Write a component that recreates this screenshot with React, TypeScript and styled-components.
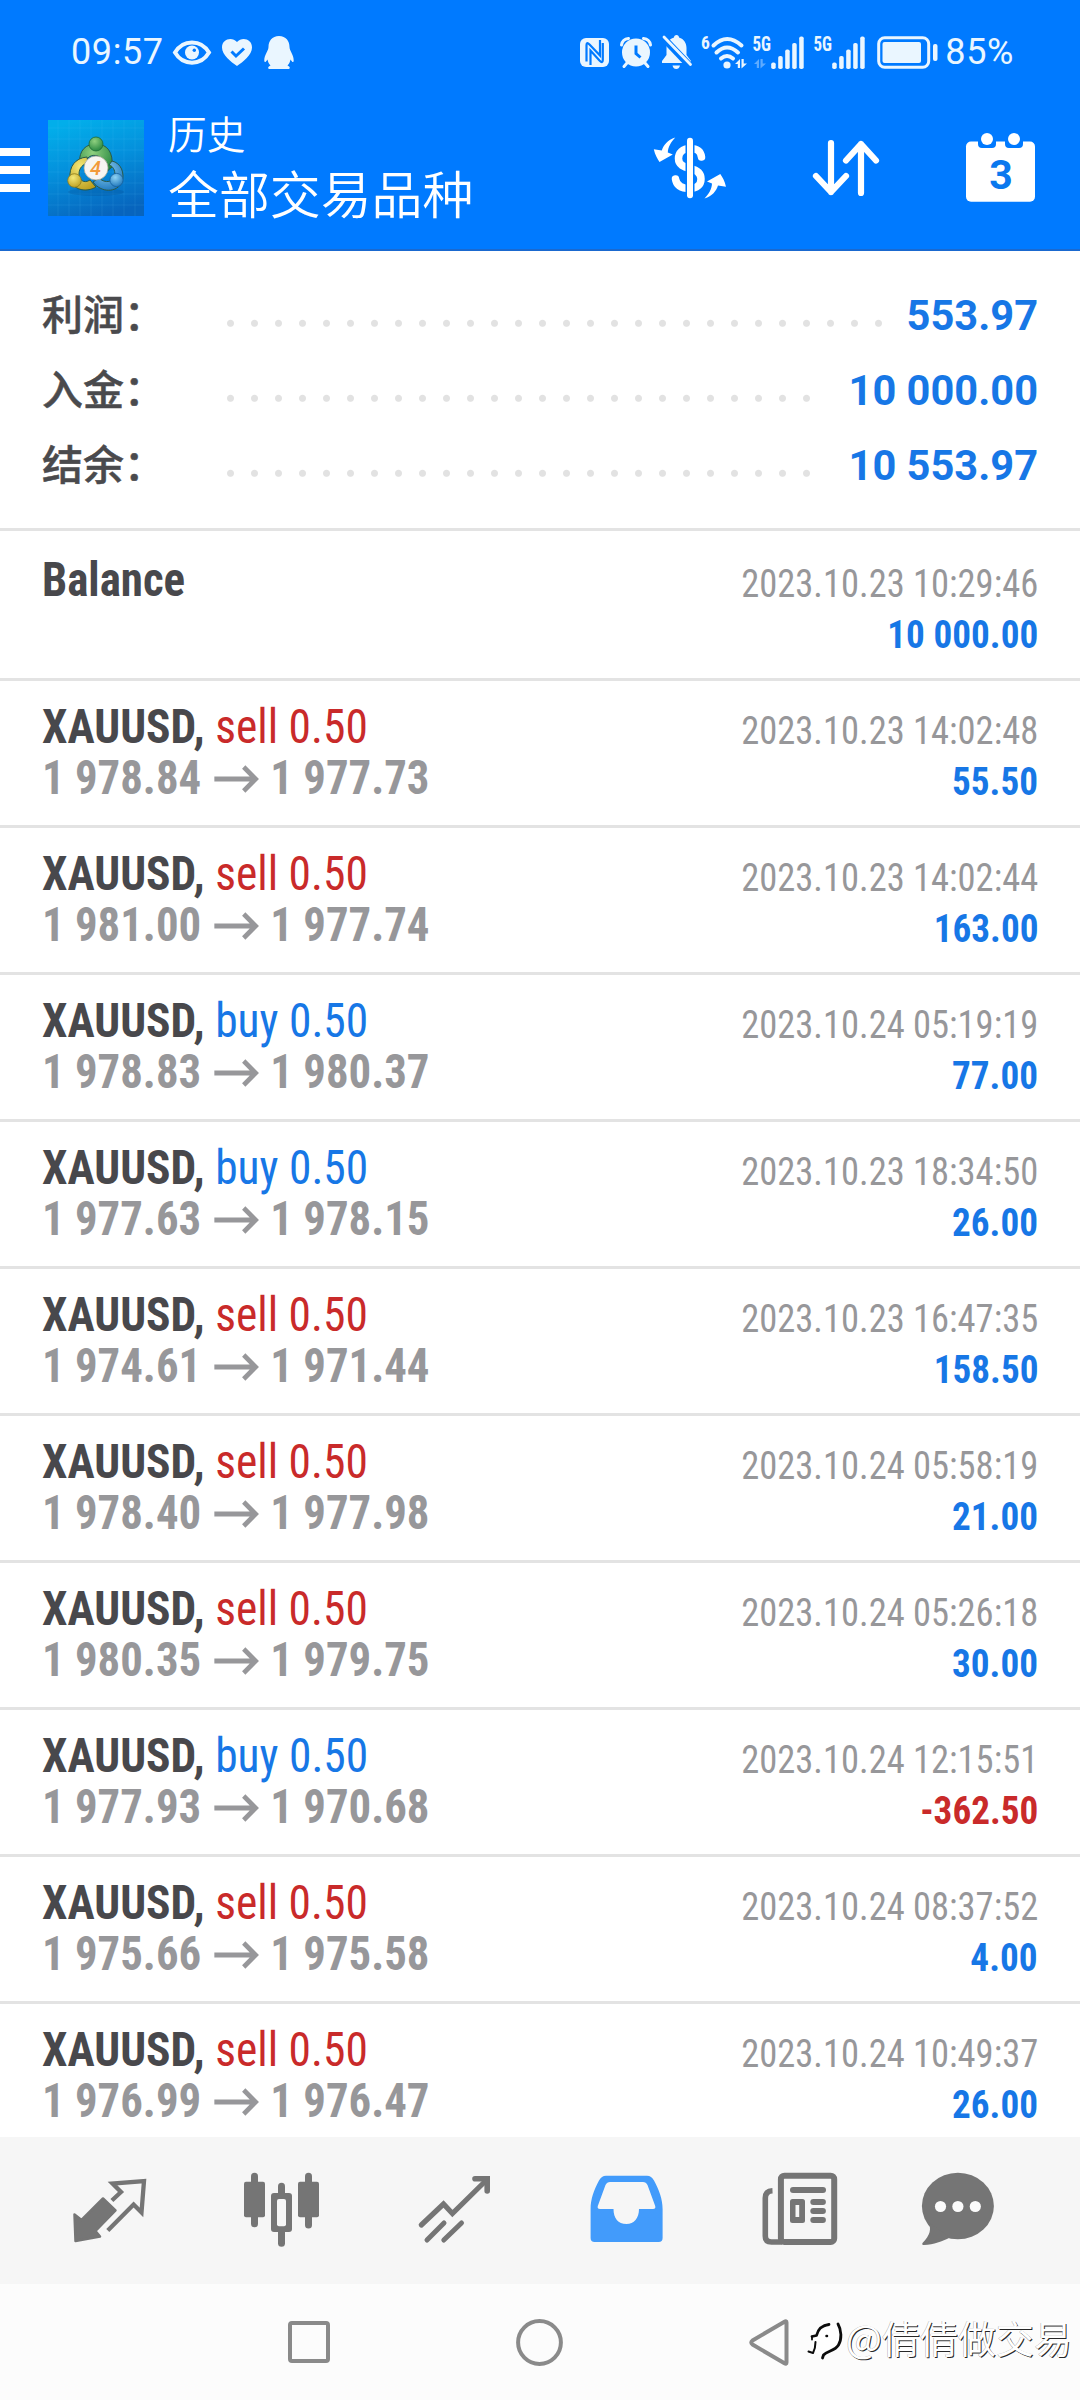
import React from "react";
import styled, { createGlobalStyle } from "styled-components";

const BLUE = "#007aff";
const VALUE_BLUE = "#1777e6";
const RED = "#c92a2a";
const GREY = "#97979a";
const TAB_GREY = "#757575";

const GlobalStyle = createGlobalStyle`
  * { box-sizing: border-box; }
  html, body { margin: 0; padding: 0; background: #fff; }
  body { overflow: hidden; }
`;

const Screen = styled.div`
  position: relative;
  width: 1080px;
  height: 2400px;
  display: flex;
  flex-direction: column;
  overflow: hidden;
  background: #fff;
  font-family: "Roboto Condensed", Roboto, "Noto Sans CJK SC", sans-serif;
`;

const Icon = styled.svg<{ $ml?: number }>`
  display: block;
  flex: none;
  overflow: visible;
  margin-left: ${(p) => p.$ml ?? 0}px;
`;

/* ---------- header ---------- */

const Header = styled.header`
  flex: none;
  height: 251px;
  display: flex;
  flex-direction: column;
  background: ${BLUE};
  border-bottom: 2px solid #1a69cf;
  color: #fff;
`;

const StatusBar = styled.div`
  flex: none;
  height: 104px;
  padding: 0 66px 0 71px;
  display: flex;
  align-items: center;
  justify-content: space-between;
  color: #eaf6ff;
`;

const StatusGroup = styled.div`
  display: flex;
  align-items: center;
`;

const StatusText = styled.span<{ $ml?: number }>`
  font: 400 36px/104px Roboto, sans-serif;
  letter-spacing: 0.6px;
  margin-left: ${(p) => p.$ml ?? 0}px;
`;

const AppBar = styled.div`
  flex: none;
  height: 128px;
  padding-right: 45px;
  display: flex;
  align-items: center;
`;

const MenuButton = styled.div`
  display: flex;
  flex-direction: column;
  gap: 10px;
  width: 30px;
  margin: 4px 18px 0 0;
`;

const MenuLine = styled.span`
  height: 8px;
  background: #fff;
`;

const Titles = styled.div`
  margin: -2px auto 0 24px;
  display: flex;
  flex-direction: column;
  font-family: "Noto Sans CJK SC", sans-serif;
  font-weight: 350;
`;

const Subtitle = styled.span`
  font-size: 38.7px;
  line-height: 50px;
`;

const Title = styled.span`
  font-size: 50.9px;
  line-height: 70px;
`;

/* ---------- summary ---------- */

const Summary = styled.section`
  flex: none;
  height: 280px;
  padding: 27px 42px 0 42px;
  border-bottom: 3px solid #e3e3e3;
`;

const SummaryRow = styled.div`
  height: 75px;
  display: flex;
  align-items: center;
`;

const SummaryLabel = styled.span`
  width: 169px;
  margin-bottom: 7px;
  font: 500 41px/60px "Noto Sans CJK SC", sans-serif;
  color: #4a4a4d;
  -webkit-text-stroke: 0.5px #4a4a4d;
`;

const Leader = styled.span`
  flex: 1;
  align-self: stretch;
  margin-right: 23px;
  background-image: radial-gradient(circle at 19.5px 45.3px, #e2e2e2 3px, rgba(226, 226, 226, 0) 4px);
  background-size: 24px 75px;
  background-repeat: repeat-x;
`;

const SummaryValue = styled.span`
  margin-top: -1px;
  font: 700 41.6px/75px Roboto, sans-serif;
  color: ${VALUE_BLUE};
`;

/* ---------- deals ---------- */

const DealList = styled.main`
  flex: 1;
  min-height: 0;
  overflow: hidden;
`;

const Deal = styled.article<{ $first?: boolean }>`
  height: ${(p) => (p.$first ? 150 : 147)}px;
  padding: ${(p) => (p.$first ? 24 : 21)}px 42px 0 41.5px;
  display: flex;
  justify-content: space-between;
  border-bottom: 3px solid #e3e3e3;
`;

const Column = styled.div<{ $right?: boolean }>`
  display: flex;
  flex-direction: column;
  align-items: ${(p) => (p.$right ? "flex-end" : "flex-start")};
  padding-top: ${(p) => (p.$right ? 3 : 0)}px;
  line-height: 51px;
  white-space: pre;
`;

const Symbol = styled.div<{ $narrow?: boolean }>`
  font-size: 47.3px;
  font-weight: 700;
  color: #48484c;
  transform: scaleX(${(p) => (p.$narrow ? 0.949 : 0.961)});
  transform-origin: left;
`;

const Side = styled.span<{ $sell?: boolean }>`
  font-weight: 400;
  color: ${(p) => (p.$sell ? RED : VALUE_BLUE)};
`;

const Prices = styled.div`
  display: flex;
  align-items: center;
  gap: 13.5px;
  font-size: 47.3px;
  font-weight: 700;
  color: ${GREY};
  transform: scaleX(0.947);
  transform-origin: left;
`;

const Time = styled.div`
  font-size: 38.5px;
  color: ${GREY};
  transform: scaleX(0.948);
  transform-origin: right;
`;

const Profit = styled.div<{ $loss?: boolean }>`
  font-size: 38.5px;
  font-weight: 700;
  color: ${(p) => (p.$loss ? RED : VALUE_BLUE)};
  transform: scaleX(0.966);
  transform-origin: right;
`;

/* ---------- bottom ---------- */

const TabBar = styled.nav`
  flex: none;
  height: 147px;
  padding: 35px 0 0 72px;
  display: flex;
  gap: 96.5px;
  background: #f6f6f6;
`;

const SystemBar = styled.footer`
  flex: none;
  height: 116px;
  padding-left: 288px;
  display: flex;
  align-items: center;
  gap: 186px;
  background: #fcfcfc;
`;

const Watermark = styled.div`
  position: absolute;
  right: 8px;
  bottom: 35px;
  display: flex;
  align-items: center;
  gap: 3px;
  font: 400 38px/56px "Noto Sans CJK SC", sans-serif;
  color: #fff;
  text-shadow: 1px 1px 0.5px rgba(0, 0, 0, 0.85), -0.5px -0.5px 0.5px rgba(0, 0, 0, 0.35);
`;

/* ---------- status icons ---------- */

const EyeIcon = () => (
  <Icon $ml={9} width="38" height="25" viewBox="0 0 38 25">
    <path d="M2 12.5C10-1 28-1 36 12.5C28 26 10 26 2 12.5Z" fill="none" stroke="#eaf6ff" strokeWidth="4" />
    <circle cx="19" cy="12.5" r="7" fill="#eaf6ff" />
    <circle cx="21.3" cy="10.2" r="1.7" fill={BLUE} />
  </Icon>
);

const HeartIcon = () => (
  <Icon $ml={11} width="30" height="27" viewBox="0 0 30 27">
    <path d="M15 27C9 23 0 16 0 8.5C0 0 10-2.500 15 3C20-2.500 30 0 30 8.500C30 16 21 23 15 27Z" fill="#eaf6ff" />
    <path d="M9.500 12.500L14 17L22 9.500" fill="none" stroke={BLUE} strokeWidth="3" />
  </Icon>
);

const PenguinIcon = () => (
  <Icon $ml={12} width="30" height="33" viewBox="0 0 30 33">
    <path
      d="M15 0C8 0 4.500 5 4.500 11C4.500 15 0 19 .3 25C.6 27 2 26 3.500 23.500C4 26 5 28 6.500 29.500C4 30.500 3 33 6 33H24C27 33 26 30.500 23.500 29.500C25 28 26 26 26.500 23.500C28 26 29.400 27 29.700 25C30 19 25.500 15 25.500 11C25.500 5 22 0 15 0Z"
      fill="#eaf6ff"
    />
  </Icon>
);

const NfcIcon = () => (
  <Icon width="29" height="29" viewBox="0 0 29 29">
    <rect width="29" height="29" rx="6" fill="#eaf6ff" />
    <path
      d="M6.500 23.500V7Q6.500 3.500 9.500 6.500L20 17.500V2M22.800 5V22Q22.800 26 19.500 22.500L10.500 12.500V27"
      fill="none"
      stroke={BLUE}
      strokeWidth="2.200"
    />
  </Icon>
);

const AlarmIcon = () => (
  <Icon $ml={11} width="32" height="31" viewBox="0 0 32 31">
    <g stroke="#eaf6ff" strokeWidth="3" strokeLinecap="round" fill="none">
      <path d="M1.500 8C2 4.500 4.500 2 8.500 1.500M30.500 8C30 4.500 27.500 2 23.500 1.500M7 26L4 29.500M25 26L28 29.500" />
    </g>
    <circle cx="16" cy="15.500" r="14" fill="#eaf6ff" />
    <path d="M16 8.500V16.500L20.500 20.500" fill="none" stroke={BLUE} strokeWidth="3" />
  </Icon>
);

const MutedBellIcon = () => (
  <Icon $ml={10} width="30" height="34" viewBox="0 0 30 34">
    <path
      d="M14.500 0C16 0 17 1 17 2.500C22 4 24.500 8 24.500 13V20L29 26V28H0V26L4.500 20V13C4.500 8 7 4 12 2.500C12 1 13 0 14.500 0ZM10.500 30.500H18C17.500 33 16 34 14.300 34C12.500 34 11 33 10.500 30.500Z"
      fill="#eaf6ff"
    />
    <path d="M0 1.500L28 31" stroke={BLUE} strokeWidth="7" />
    <path d="M2 2L28.500 29.500" stroke="#eaf6ff" strokeWidth="2.800" strokeLinecap="round" />
  </Icon>
);

const DataArrows = ({ x, opacity = 1 }: { x: number; opacity?: number }) => (
  <g opacity={opacity} fill="#eaf6ff">
    <path d={`M${x + 5} 23V32H${x + 2.8}V28H${x}ZM${x + 6.5} 23H${x + 8.7}V27.500H${x + 12}L${x + 6.5} 32.500Z`} />
  </g>
);

const WifiIcon = () => (
  <Icon $ml={10} width="44" height="33" viewBox="0 0 44 33">
    <text x="-1" y="13" fontSize="17.500" fontWeight="700" fontFamily="Roboto Condensed, sans-serif" fill="#eaf6ff">6</text>
    <g fill="none" stroke="#eaf6ff" strokeWidth="4" strokeLinecap="round">
      <path d="M11.500 9.500Q25-3.500 39.500 9.500" />
      <path d="M14.500 16.500Q25 6.500 36 16.500" />
      <path d="M19 22.500Q25 17.500 31 22.500" />
    </g>
    <circle cx="25" cy="29" r="3.600" fill="#eaf6ff" />
    <DataArrows x={33} />
  </Icon>
);

const SignalIcon = ({ ml, ghost }: { ml: number; ghost?: boolean }) => (
  <Icon $ml={ml} width="51" height="33" viewBox="0 0 51 33">
    <text
      x="-.5"
      y="15"
      fontSize="20"
      fontWeight="700"
      textLength="18.500"
      lengthAdjust="spacingAndGlyphs"
      fontFamily="Roboto Condensed, sans-serif"
      fill="#eaf6ff"
    >
      5G
    </text>
    {ghost && <DataArrows x={1} opacity={0.4} />}
    {[6.5, 13, 19.5, 26, 32.5].map((h, i) => (
      <rect key={h} x={18.2 + i * 7} y={33 - h} width="4.500" height={h} rx="1.800" fill="#eaf6ff" />
    ))}
  </Icon>
);

const BatteryIcon = () => (
  <Icon $ml={12} width="61" height="33" viewBox="0 0 61 33">
    <rect x="1.700" y="1.700" width="50" height="29.600" rx="6" fill="none" stroke="#eaf6ff" strokeWidth="3" />
    <rect x="5.500" y="6" width="38.500" height="21" rx="2" fill="#eaf6ff" />
    <rect x="56" y="8" width="4.500" height="17" rx="2" fill="#eaf6ff" />
  </Icon>
);

/* ---------- app bar icons ---------- */

const AppLogo = () => (
  <Icon width="96" height="96" viewBox="0 0 96 96">
    <defs>
      <linearGradient id="bg" x1="0.300" y1="0" x2="0.600" y2="1">
        <stop offset="0" stopColor="#02aeea" />
        <stop offset="0.450" stopColor="#0490dc" />
        <stop offset="1" stopColor="#0764bd" />
      </linearGradient>
      <radialGradient id="green" cx="0.400" cy="0.300" r="0.800">
        <stop offset="0" stopColor="#8fd07f" />
        <stop offset="1" stopColor="#1c7f3a" />
      </radialGradient>
      <radialGradient id="yellow" cx="0.400" cy="0.300" r="0.800">
        <stop offset="0" stopColor="#f4e978" />
        <stop offset="1" stopColor="#b99a1a" />
      </radialGradient>
      <radialGradient id="azure" cx="0.400" cy="0.300" r="0.800">
        <stop offset="0" stopColor="#8fd3f4" />
        <stop offset="1" stopColor="#1670b8" />
      </radialGradient>
    </defs>
    <rect width="96" height="96" fill="url(#bg)" />
    <path
      d="M10 0V96M21 0V96M32 0V96M43 0V96M54 0V96M65 0V96M76 0V96M87 0V96M0 8H96M0 19H96M0 30H96M0 41H96M0 52H96M0 63H96M0 74H96M0 85H96"
      stroke="#6fd0ff"
      strokeOpacity="0.120"
      strokeWidth="1"
    />
    <ellipse cx="48" cy="72" rx="28" ry="4" fill="#054a90" opacity="0.250" />
    <g stroke="#2b5a48" strokeWidth="1">
      <path d="M31.500 43C31 30 38 24 48 24C59 24 65.500 32 64 47L57 53L55 42C53 34 43 34 40 38Z" fill="url(#green)" />
      <path d="M39 37C27 38 21 47 22 58C24 70 38 73 48 67L42 60C36 64 31 60 31 54C31 48 35 44 40 43Z" fill="url(#yellow)" />
      <path d="M64 41C73 43 77 53 74 62C69 73 53 73 45 62L51 58C57 64 66 62 67 55C67 50 65 46 61 45Z" fill="url(#azure)" />
    </g>
    <circle cx="48" cy="24" r="7" fill="url(#green)" stroke="#1d6b35" strokeWidth="0.800" />
    <circle cx="26.500" cy="60.500" r="6.800" fill="url(#yellow)" stroke="#8b7a1b" strokeWidth="0.800" />
    <circle cx="68.500" cy="60" r="6.600" fill="url(#azure)" stroke="#155f9e" strokeWidth="0.800" />
    <circle cx="48" cy="48" r="12" fill="#f7f5f2" stroke="#a5a899" strokeWidth="0.800" />
    <text x="47.500" y="55" textAnchor="middle" fontFamily="Roboto, sans-serif" fontStyle="italic" fontWeight="500" fontSize="20" fill="#f29a3a">4</text>
  </Icon>
);

const CurrencyIcon = () => (
  <Icon width="74" height="62" viewBox="0 0 74 62">
    <path
      d="M48.500 20C47.500 13 43 11.500 37 11.500C29.500 11.500 25.500 16 25.500 21.500C25.500 28 31 30 37 31.500C44 33 48 36.500 48 42C48 48 43.500 51.500 37 51.500C29 51.500 23.500 49 22.500 42"
      fill="none"
      stroke="#fff"
      strokeWidth="7.500"
      strokeLinecap="round"
    />
    <rect x="32.500" y="-1" width="9" height="64" rx="4.500" fill={BLUE} />
    <rect x="34" y=".7" width="6" height="60.600" rx="3" fill="#fff" />
    <path id="turn" d="M22.300 .5C14.500 3 10.500 8 8.800 13.500L.8 12.300C2 18 4.500 22 6.500 25L19.800 17.500L14.800 15.500C15 10 18 5 22.300 .5Z" fill="#fff" />
    <use href="#turn" transform="rotate(180 36.900 31)" />
  </Icon>
);

const SortIcon = () => (
  <Icon $ml={86} width="66" height="56" viewBox="0 0 66 56">
    <path
      d="M18 3V52M3 36L18 52L33 36M48 53V4M33 20.500L48 4L63 20.500"
      fill="none"
      stroke="#fff"
      strokeWidth="6.200"
      strokeLinecap="round"
      strokeLinejoin="round"
    />
  </Icon>
);

const CalendarIcon = () => (
  <Icon $ml={87} width="69" height="73" viewBox="0 0 69 73">
    <rect y="9.500" width="69" height="60.300" rx="5" fill="#fff" />
    <path d="M12 9V12Q12 16 16 16H26Q30 16 30 12V9ZM39 9V12Q39 16 43 16H53Q57 16 57 12V9Z" fill={BLUE} />
    <circle cx="21" cy="7" r="6" fill="#fff" />
    <circle cx="48" cy="7" r="6" fill="#fff" />
    <text x="35" y="57" textAnchor="middle" fontFamily="Roboto, sans-serif" fontWeight="700" fontSize="41" fill="#0b78ee">3</text>
  </Icon>
);

/* ---------- tab icons ---------- */

const QuotesIcon = () => (
  <Icon width="76" height="76" viewBox="0 0 76 76">
    <path
      d="M2.500 42.500L9.500 48L31 26.500L43.500 38.500L23.500 59L28 64.500L3.500 69Z"
      fill={TAB_GREY}
      stroke={TAB_GREY}
      strokeWidth="2.500"
      strokeLinejoin="round"
    />
    <path d="M39.900 28.500L49 20L40.500 11.500L72 9L69.500 40.500L61.600 32.500L35.800 58.500" fill="none" stroke={TAB_GREY} strokeWidth="4.300" />
  </Icon>
);

const CandlesIcon = () => (
  <Icon $ml={-0.5} width="76" height="76" viewBox="0 0 76 76" fill={TAB_GREY}>
    <rect y="9.700" width="21" height="35.500" rx="2" />
    <rect x="7" y=".7" width="7" height="54.500" rx="3.500" />
    <rect x="54" y="9.700" width="21" height="35.500" rx="2" />
    <rect x="61" y=".7" width="7" height="55.700" rx="3.500" />
    <rect x="34" y="10.700" width="7" height="64" rx="3.500" />
    <rect x="27" y="21" width="21" height="39" rx="3" />
    <rect x="33" y="27" width="9" height="27.300" rx="2" fill="#f6f6f6" />
  </Icon>
);

const TrendIcon = () => (
  <Icon width="76" height="76" viewBox="0 0 76 76" fill="none" stroke={TAB_GREY} strokeLinecap="round">
    <path d="M4.300 53L26.500 32L35.400 41.500L69 8.500" strokeWidth="5.200" />
    <path d="M58 6.800H70.200V19" strokeWidth="5.600" />
    <path d="M10 68L27 51M26.800 68L44.500 51" strokeWidth="5" />
  </Icon>
);

const InboxIcon = () => (
  <Icon width="76" height="76" viewBox="0 0 76 76">
    <path
      fillRule="evenodd"
      fill="#429bfb"
      d="M17 3.700H58Q62.500 3.700 65 8.500C70 18 73.600 27 73.600 37V66Q73.600 70 69.600 70H5.600Q1.600 70 1.600 66V37C1.600 27 5 18 10 8.500Q12.500 3.700 17 3.700ZM21 10Q18 10 16.500 13L8.800 34Q8 37 11 37H24.500C24.500 46 29 52 37.500 52C45 52 50 46 50 37H64Q67 37 66.200 34L58.500 13Q57 10 54 10Z"
    />
  </Icon>
);

const NewsIcon = () => (
  <Icon width="76" height="76" viewBox="0 0 76 76">
    <rect x="18.900" y="3.700" width="53.300" height="66.300" rx="3.500" fill="none" stroke={TAB_GREY} strokeWidth="6" />
    <path d="M10.500 18.700Q3.300 19 3.300 26V64Q3.300 70 9.500 70H20" fill="none" stroke={TAB_GREY} strokeWidth="5.600" />
    <g fill={TAB_GREY}>
      <rect x="28" y="15" width="36" height="6" rx="3" />
      <rect x="28" y="27" width="15" height="24" rx="2.500" />
      <rect x="48.300" y="27" width="15.600" height="6" rx="3" />
      <rect x="48.300" y="36" width="15.600" height="6" rx="3" />
      <rect x="48.300" y="45" width="15.600" height="6" rx="3" />
    </g>
    <rect x="33.500" y="33" width="3.700" height="12" fill="#f6f6f6" />
  </Icon>
);

const ChatIcon = () => (
  <Icon $ml={-14} width="76" height="76" viewBox="0 0 76 76">
    <ellipse cx="37.900" cy="34" rx="36" ry="33.300" fill={TAB_GREY} />
    <path d="M8 50C12 56 10 64 2.500 71Q1.500 73 4 73C14 72.500 22 69.500 30 65.500Z" fill={TAB_GREY} />
    <g fill="#fbfbfb">
      <circle cx="20.500" cy="34.500" r="5.600" />
      <circle cx="37.900" cy="34.500" r="5.600" />
      <circle cx="55.300" cy="34.500" r="5.600" />
    </g>
  </Icon>
);

/* ---------- data ---------- */

const summary = [
  ["利润：", "553.97"],
  ["入金：", "10 000.00"],
  ["结余：", "10 553.97"],
];

type Trade = { side: "sell" | "buy"; from: string; to: string; time: string; profit: string };

const trades: Trade[] = [
  { side: "sell", from: "1 978.84", to: "1 977.73", time: "2023.10.23 14:02:48", profit: "55.50" },
  { side: "sell", from: "1 981.00", to: "1 977.74", time: "2023.10.23 14:02:44", profit: "163.00" },
  { side: "buy", from: "1 978.83", to: "1 980.37", time: "2023.10.24 05:19:19", profit: "77.00" },
  { side: "buy", from: "1 977.63", to: "1 978.15", time: "2023.10.23 18:34:50", profit: "26.00" },
  { side: "sell", from: "1 974.61", to: "1 971.44", time: "2023.10.23 16:47:35", profit: "158.50" },
  { side: "sell", from: "1 978.40", to: "1 977.98", time: "2023.10.24 05:58:19", profit: "21.00" },
  { side: "sell", from: "1 980.35", to: "1 979.75", time: "2023.10.24 05:26:18", profit: "30.00" },
  { side: "buy", from: "1 977.93", to: "1 970.68", time: "2023.10.24 12:15:51", profit: "-362.50" },
  { side: "sell", from: "1 975.66", to: "1 975.58", time: "2023.10.24 08:37:52", profit: "4.00" },
  { side: "sell", from: "1 976.99", to: "1 976.47", time: "2023.10.24 10:49:37", profit: "26.00" },
];

const PriceArrow = () => (
  <Icon width="46" height="28" viewBox="0 0 46 28">
    <path d="M0 14H43.500M31 2L43.500 14L31 26" fill="none" stroke={GREY} strokeWidth="5" />
  </Icon>
);

const TradeRow = ({ side, from, to, time, profit }: Trade) => (
  <Deal>
    <Column>
      <Symbol>
        XAUUSD, <Side $sell={side === "sell"}>{side} 0.50</Side>
      </Symbol>
      <Prices>
        <span>{from}</span>
        <PriceArrow />
        <span>{to}</span>
      </Prices>
    </Column>
    <Column $right>
      <Time>{time}</Time>
      <Profit $loss={profit.startsWith("-")}>{profit}</Profit>
    </Column>
  </Deal>
);

export default function App() {
  return (
    <Screen>
      <GlobalStyle />
      <Header>
        <StatusBar>
          <StatusGroup>
            <StatusText>09:57</StatusText>
            <EyeIcon />
            <HeartIcon />
            <PenguinIcon />
          </StatusGroup>
          <StatusGroup>
            <NfcIcon />
            <AlarmIcon />
            <MutedBellIcon />
            <WifiIcon />
            <SignalIcon ml={7} ghost />
            <SignalIcon ml={10} />
            <BatteryIcon />
            <StatusText $ml={7}>85%</StatusText>
          </StatusGroup>
        </StatusBar>
        <AppBar>
          <MenuButton>
            <MenuLine />
            <MenuLine />
            <MenuLine />
          </MenuButton>
          <AppLogo />
          <Titles>
            <Subtitle>历史</Subtitle>
            <Title>全部交易品种</Title>
          </Titles>
          <CurrencyIcon />
          <SortIcon />
          <CalendarIcon />
        </AppBar>
      </Header>

      <Summary>
        {summary.map(([label, value]) => (
          <SummaryRow key={label}>
            <SummaryLabel>{label}</SummaryLabel>
            <Leader />
            <SummaryValue>{value}</SummaryValue>
          </SummaryRow>
        ))}
      </Summary>

      <DealList>
        <Deal $first>
          <Column>
            <Symbol $narrow>Balance</Symbol>
          </Column>
          <Column $right>
            <Time>2023.10.23 10:29:46</Time>
            <Profit>10 000.00</Profit>
          </Column>
        </Deal>
        {trades.map((t) => (
          <TradeRow key={t.from} {...t} />
        ))}
      </DealList>

      <TabBar>
        <QuotesIcon />
        <CandlesIcon />
        <TrendIcon />
        <InboxIcon />
        <NewsIcon />
        <ChatIcon />
      </TabBar>

      <SystemBar>
        <Icon width="42" height="42" viewBox="0 0 42 42">
          <rect x="2" y="2" width="38" height="38" rx="2" fill="none" stroke="#8a8a8a" strokeWidth="4" />
        </Icon>
        <Icon width="47" height="47" viewBox="0 0 47 47">
          <circle cx="23.500" cy="23.500" r="21.400" fill="none" stroke="#8a8a8a" strokeWidth="4" />
        </Icon>
        <Icon width="40" height="47" viewBox="0 0 40 47">
          <path
            d="M37.500 3.500V43.500Q37.500 45.500 35.500 44.300L3.500 25.500Q1 23.500 3.500 21.500L35.500 2.700Q37.500 1.500 37.500 3.500Z"
            fill="none"
            stroke="#8a8a8a"
            strokeWidth="4"
            strokeLinejoin="round"
          />
        </Icon>
      </SystemBar>

      <Watermark>
        <Icon width="36" height="30" viewBox="0 0 36 30">
          <path d="M5 15L10 13C11 6 15 1 24 1C31 1 34 8 34 13C34 23 29 29 22 30L16 35L7 29Z" fill="#fff" />
          <g fill="none" stroke="#0c0c0c" strokeLinecap="round" strokeLinejoin="round">
            <path d="M5 14.500L9.500 13.500C11 8 13.500 3.500 22 2.500" strokeWidth="2.800" />
            <path d="M5 14.500V17.500" strokeWidth="1.800" />
            <path d="M31 2C34.500 8 35 17 31.500 23C28 29 20 29 16.500 33L15.500 36" strokeWidth="2.800" />
            <path d="M8.500 20C8.500 24 7.500 28 6 31L1.500 29.500" strokeWidth="2" />
            <path d="M19.500 14H20" strokeWidth="2.500" />
          </g>
        </Icon>
        <span>@倩倩做交易</span>
      </Watermark>
    </Screen>
  );
}
